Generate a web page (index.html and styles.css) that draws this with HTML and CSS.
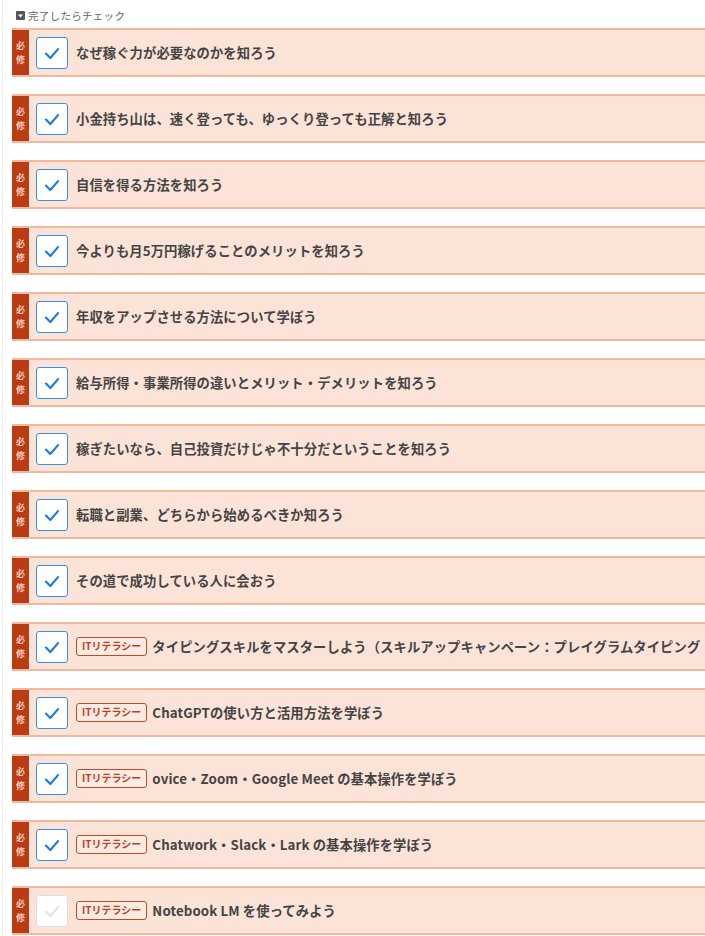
FILE: index.html
```html
<!DOCTYPE html>
<html lang="ja">
<head>
<meta charset="utf-8">
<link rel="stylesheet" href="styles.css">
</head>
<body>
<div class="wrap">
  <div class="head"><span class="head-icon"><svg width="9" height="9" viewBox="0 0 9 9"><rect width="9" height="9" rx="1" fill="#555"/><path d="M2 3.5h5L4.5 6.5z" fill="#fff"/></svg></span>完了したらチェック</div>
  <ul class="list">
    <li class="row"><span class="req">必<br>修</span><span class="cb on"><svg viewBox="0 0 20 20"><path d="M4.5 10.5l4 4 7-8"/></svg></span><span class="title">なぜ稼ぐ力が必要なのかを知ろう</span></li>
    <li class="row"><span class="req">必<br>修</span><span class="cb on"><svg viewBox="0 0 20 20"><path d="M4.5 10.5l4 4 7-8"/></svg></span><span class="title">小金持ち山は、速く登っても、ゆっくり登っても正解と知ろう</span></li>
    <li class="row"><span class="req">必<br>修</span><span class="cb on"><svg viewBox="0 0 20 20"><path d="M4.5 10.5l4 4 7-8"/></svg></span><span class="title">自信を得る方法を知ろう</span></li>
    <li class="row"><span class="req">必<br>修</span><span class="cb on"><svg viewBox="0 0 20 20"><path d="M4.5 10.5l4 4 7-8"/></svg></span><span class="title">今よりも月5万円稼げることのメリットを知ろう</span></li>
    <li class="row"><span class="req">必<br>修</span><span class="cb on"><svg viewBox="0 0 20 20"><path d="M4.5 10.5l4 4 7-8"/></svg></span><span class="title">年収をアップさせる方法について学ぼう</span></li>
    <li class="row"><span class="req">必<br>修</span><span class="cb on"><svg viewBox="0 0 20 20"><path d="M4.5 10.5l4 4 7-8"/></svg></span><span class="title">給与所得・事業所得の違いとメリット・デメリットを知ろう</span></li>
    <li class="row"><span class="req">必<br>修</span><span class="cb on"><svg viewBox="0 0 20 20"><path d="M4.5 10.5l4 4 7-8"/></svg></span><span class="title">稼ぎたいなら、自己投資だけじゃ不十分だということを知ろう</span></li>
    <li class="row"><span class="req">必<br>修</span><span class="cb on"><svg viewBox="0 0 20 20"><path d="M4.5 10.5l4 4 7-8"/></svg></span><span class="title">転職と副業、どちらから始めるべきか知ろう</span></li>
    <li class="row"><span class="req">必<br>修</span><span class="cb on"><svg viewBox="0 0 20 20"><path d="M4.5 10.5l4 4 7-8"/></svg></span><span class="title">その道で成功している人に会おう</span></li>
    <li class="row"><span class="req">必<br>修</span><span class="cb on"><svg viewBox="0 0 20 20"><path d="M4.5 10.5l4 4 7-8"/></svg></span><span class="tag">ITリテラシー</span><span class="title">タイピングスキルをマスターしよう（スキルアップキャンペーン：プレイグラムタイピング</span></li>
    <li class="row"><span class="req">必<br>修</span><span class="cb on"><svg viewBox="0 0 20 20"><path d="M4.5 10.5l4 4 7-8"/></svg></span><span class="tag">ITリテラシー</span><span class="title">ChatGPTの使い方と活用方法を学ぼう</span></li>
    <li class="row"><span class="req">必<br>修</span><span class="cb on"><svg viewBox="0 0 20 20"><path d="M4.5 10.5l4 4 7-8"/></svg></span><span class="tag">ITリテラシー</span><span class="title">ovice・Zoom・Google Meet の基本操作を学ぼう</span></li>
    <li class="row"><span class="req">必<br>修</span><span class="cb on"><svg viewBox="0 0 20 20"><path d="M4.5 10.5l4 4 7-8"/></svg></span><span class="tag">ITリテラシー</span><span class="title">Chatwork・Slack・Lark の基本操作を学ぼう</span></li>
    <li class="row"><span class="req">必<br>修</span><span class="cb off"><svg viewBox="0 0 20 20"><path d="M4.5 10.5l4 4 7-8"/></svg></span><span class="tag">ITリテラシー</span><span class="title">Notebook LM を使ってみよう</span></li>
  </ul>
</div>
</body>
</html>
```
FILE: styles.css
```css
html, body {
  margin: 0;
  padding: 0;
  background: #fff;
  overflow: hidden;
}
body {
  font-family: "Noto Sans CJK JP", "Noto Sans", sans-serif;
  padding-left: 2px;
  width: 703px;
}
.wrap {
  border-left: 1px solid #ececec;
  padding-left: 9px;
  min-height: 936px;
}
.head {
  display: flex;
  align-items: center;
  gap: 3px;
  height: 28px;
  padding-left: 4px;
  padding-top: 2px;
  box-sizing: border-box;
  font-size: 10.5px;
  color: #666;
  letter-spacing: 0.3px;
}
.head-icon {
  display: flex;
}
.list {
  list-style: none;
  margin: 0;
  padding: 0;
  display: flex;
  flex-direction: column;
  gap: 17px;
}
.row {
  display: flex;
  align-items: center;
  height: 49px;
  box-sizing: border-box;
  background: #fce3d8;
  border-top: 2px solid #f3b79e;
  border-bottom: 2px solid #f3b79e;
  white-space: nowrap;
  overflow: hidden;
}
.req {
  align-self: stretch;
  width: 17px;
  margin: -2px 0;
  flex: none;
  background: #b93c14;
  color: #f6cabb;
  font-size: 9px;
  font-weight: 700;
  line-height: 14px;
  display: flex;
  align-items: center;
  justify-content: center;
  text-align: center;
}
.cb {
  flex: none;
  width: 32px;
  height: 32px;
  margin-left: 7px;
  margin-right: 8px;
  box-sizing: border-box;
  background: #fff;
  border-radius: 3px;
  display: flex;
  align-items: center;
  justify-content: center;
}
.cb svg {
  width: 22px;
  height: 22px;
  fill: none;
  stroke-width: 2;
  stroke-linecap: round;
  stroke-linejoin: round;
}
.cb.on {
  border: 1.5px solid #3a8ee6;
}
.cb.on svg {
  stroke: #1f7ae0;
}
.cb.off {
  border: 1.5px solid #dcdcdc;
}
.cb.off svg {
  stroke: #e2e2e2;
}
.tag {
  flex: none;
  height: 19px;
  box-sizing: border-box;
  border: 1.5px solid #c24a24;
  border-radius: 3px;
  padding: 0 5px;
  margin-right: 5px;
  font-size: 10px;
  font-weight: 700;
  line-height: 16px;
  color: #c0401a;
  background: #fcebe3;
}
.title {
  font-size: 13.3px;
  font-weight: 700;
  color: #444;
  letter-spacing: 0.1px;
}
```
